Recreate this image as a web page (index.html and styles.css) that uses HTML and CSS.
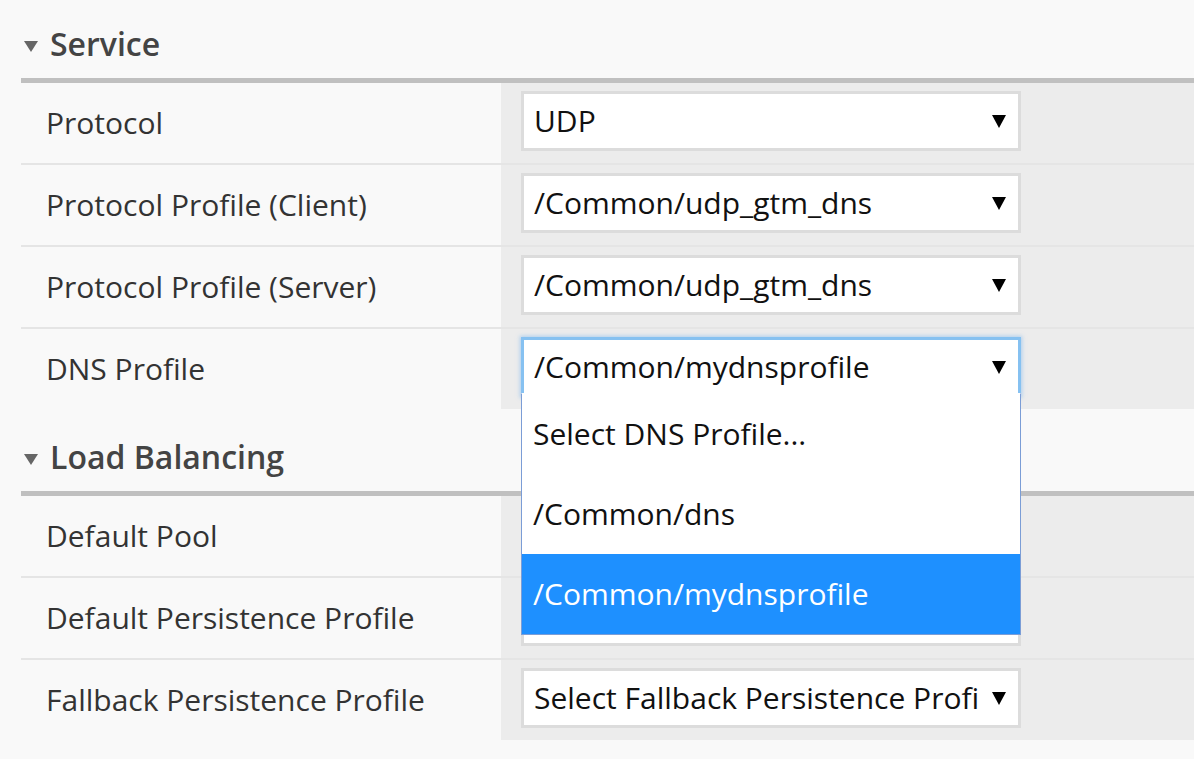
FILE: index.html
```html
<!DOCTYPE html>
<html lang="en">
<head>
<meta charset="utf-8">
<title>Service settings</title>
<link rel="stylesheet" href="styles.css">
</head>
<body>
<div class="page">
  <section class="section">
    <div class="section-head">
      <svg class="caret" width="14" height="11" viewBox="0 0 14 11"><polygon points="0,0 14,0 7,11" fill="#666"/></svg>
      <span class="section-title">Service</span>
    </div>
    <div class="rows">
      <div class="row">
        <div class="label">Protocol</div>
        <div class="value">
          <div class="select"><span class="select-text">UDP</span><svg class="arrow" width="14" height="13" viewBox="0 0 14 13"><polygon points="0,0 14,0 7,13" fill="#000"/></svg></div>
        </div>
      </div>
      <div class="row">
        <div class="label">Protocol Profile (Client)</div>
        <div class="value">
          <div class="select"><span class="select-text">/Common/udp_gtm_dns</span><svg class="arrow" width="14" height="13" viewBox="0 0 14 13"><polygon points="0,0 14,0 7,13" fill="#000"/></svg></div>
        </div>
      </div>
      <div class="row">
        <div class="label">Protocol Profile (Server)</div>
        <div class="value">
          <div class="select"><span class="select-text">/Common/udp_gtm_dns</span><svg class="arrow" width="14" height="13" viewBox="0 0 14 13"><polygon points="0,0 14,0 7,13" fill="#000"/></svg></div>
        </div>
      </div>
      <div class="row">
        <div class="label">DNS Profile</div>
        <div class="value">
          <div class="select select-open"><span class="select-text">/Common/mydnsprofile</span><svg class="arrow" width="14" height="13" viewBox="0 0 14 13"><polygon points="0,0 14,0 7,13" fill="#000"/></svg>
            <ul class="dropdown">
              <li class="option">Select DNS Profile...</li>
              <li class="option">/Common/dns</li>
              <li class="option option-selected">/Common/mydnsprofile</li>
            </ul>
          </div>
        </div>
      </div>
    </div>
  </section>
  <section class="section">
    <div class="section-head">
      <svg class="caret" width="14" height="11" viewBox="0 0 14 11"><polygon points="0,0 14,0 7,11" fill="#666"/></svg>
      <span class="section-title">Load Balancing</span>
    </div>
    <div class="rows">
      <div class="row">
        <div class="label">Default Pool</div>
        <div class="value">
          <div class="select"><span class="select-text"></span><svg class="arrow" width="14" height="13" viewBox="0 0 14 13"><polygon points="0,0 14,0 7,13" fill="#000"/></svg></div>
        </div>
      </div>
      <div class="row">
        <div class="label">Default Persistence Profile</div>
        <div class="value">
          <div class="select"><span class="select-text"></span><svg class="arrow" width="14" height="13" viewBox="0 0 14 13"><polygon points="0,0 14,0 7,13" fill="#000"/></svg></div>
        </div>
      </div>
      <div class="row">
        <div class="label">Fallback Persistence Profile</div>
        <div class="value">
          <div class="select"><span class="select-text">Select Fallback Persistence Profile...</span><svg class="arrow" width="14" height="13" viewBox="0 0 14 13"><polygon points="0,0 14,0 7,13" fill="#000"/></svg></div>
        </div>
      </div>
    </div>
  </section>
</div>
</body>
</html>
```

FILE: styles.css
```css
html, body {
  margin: 0;
  padding: 0;
  background: #f9f9f9;
}

body {
  font-family: "Open Sans", "Noto Sans", sans-serif;
  overflow: hidden;
}

.page {
  margin-left: 21px;
}

.section + .section {
  margin-top: 4px;
}

.section-head {
  height: 83px;
  box-sizing: border-box;
  padding: 24px 0 0 3px;
  border-bottom: 5px solid #c0c0c0;
  display: flex;
  align-items: flex-start;
}

.caret {
  margin-top: 17px;
  margin-right: 12px;
  flex: none;
}

.section-title {
  font-size: 32px;
  font-weight: 600;
  line-height: 40px;
  color: #444;
}

.row {
  display: grid;
  grid-template-columns: 480px 1fr;
  border-bottom: 2px solid #e5e5e5;
}

.row:last-child {
  border-bottom: none;
}

.label {
  padding-left: 25px;
  font-size: 30px;
  line-height: 80px;
  color: #333;
  white-space: nowrap;
}

.value {
  background: #ececec;
  padding: 8px 0 12px 20px;
}

.select {
  position: relative;
  width: 500px;
  height: 60px;
  box-sizing: border-box;
  border: 3px solid #dcdcdc;
  background: #fff;
  display: flex;
  align-items: center;
  padding-left: 10px;
  font-size: 30px;
  color: #111;
}

.select-open {
  border-color: #86c1f1;
  box-shadow: 0 0 4px 1px rgba(120, 180, 240, 0.55);
}

.select-text {
  flex: 1;
  min-width: 0;
  overflow: hidden;
  white-space: nowrap;
  line-height: 54px;
}

.arrow {
  flex: none;
  margin-left: 14px;
  margin-right: 12px;
}

.dropdown {
  position: absolute;
  top: 53px;
  left: -3px;
  width: 500px;
  box-sizing: border-box;
  margin: 0;
  padding: 0;
  list-style: none;
  background: #fff;
  border: 1px solid #7b9dd6;
  border-top: 1px solid #fff;
  z-index: 10;
}

.option {
  height: 80px;
  line-height: 80px;
  padding-left: 11px;
  font-size: 30px;
  color: #111;
  white-space: nowrap;
}

.option-selected {
  background: #1e90ff;
  color: #fff;
}
```
